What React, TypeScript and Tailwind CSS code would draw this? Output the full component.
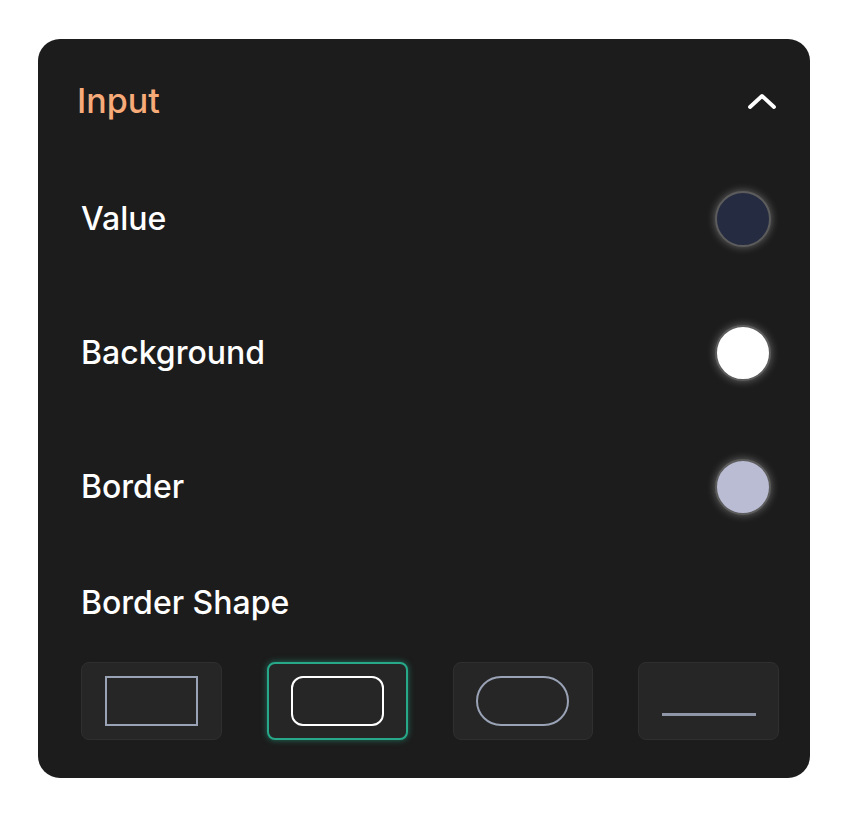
import React, { useState } from "react";

type Shape = "square" | "rounded" | "pill" | "underline";

const colorRows = [
  { label: "Value", color: "bg-[#252b40]" },
  { label: "Background", color: "bg-white" },
  { label: "Border", color: "bg-[#b9bcd3]" },
];

const shapes: Shape[] = ["square", "rounded", "pill", "underline"];

const ShapePreview: React.FC<{ shape: Shape; active: boolean }> = ({ shape, active }) => {
  if (shape === "underline") {
    return <div className="mt-[26px] h-[3px] w-[94px] bg-[#8e96a8]" />;
  }
  const radius =
    shape === "square" ? "rounded-none" : shape === "rounded" ? "rounded-[12px]" : "rounded-full";
  const stroke = active ? "border-white" : "border-[#9aa3b5]";
  return <div className={`h-[50px] w-[93px] border-2 ${stroke} ${radius}`} />;
};

export default function App() {
  const [shape, setShape] = useState<Shape>("rounded");

  return (
    <div
      className="flex min-h-[818px] w-full items-start justify-center bg-white pt-[39px]"
      style={{ fontFamily: "Inter, 'Noto Sans', sans-serif" }}
    >
      <div className="flex w-[772px] flex-col rounded-[22px] bg-[#1c1c1c] pb-[38px] pl-[39px] pr-[31px] pt-[42px]">
        {/* Header */}
        <div className="flex h-[40px] items-center justify-between">
          <span className="text-[34px] font-medium leading-none text-[#f7ab79]">Input</span>
          <button className="mr-[2px] flex items-center" aria-label="Collapse">
            <svg width="30" height="20" viewBox="0 0 30 20" fill="none">
              <polyline
                points="3,16 15,5 27,16"
                stroke="white"
                strokeWidth="3.8"
                strokeLinecap="round"
                strokeLinejoin="round"
              />
            </svg>
          </button>
        </div>

        {/* Color rows */}
        <div className="mt-[70px] flex flex-col gap-[78px] pl-[4px]">
          {colorRows.map((row) => (
            <div key={row.label} className="flex h-[56px] items-center justify-between">
              <span className="text-[32px] font-medium leading-none text-white">{row.label}</span>
              <div
                className={`mr-[8px] h-[56px] w-[56px] rounded-full border-2 border-[#5c5c5c] ${row.color} shadow-[0_0_8px_rgba(255,255,255,0.35)]`}
              />
            </div>
          ))}
        </div>

        {/* Border shape */}
        <div className="mt-[68px] flex h-[40px] items-center pl-[4px]">
          <span className="text-[32px] font-medium leading-none text-white">Border Shape</span>
        </div>

        <div className="mt-[39px] grid grid-cols-4 gap-[45px] pl-[4px]">
          {shapes.map((s) => {
            const active = s === shape;
            return (
              <button
                key={s}
                onClick={() => setShape(s)}
                className={`flex h-[78px] items-center justify-center rounded-[8px] bg-[#262626] ${
                  active
                    ? "border-2 border-[#27a889] shadow-[0_0_6px_rgba(39,168,137,0.6)]"
                    : "border border-[#2f2f2f]"
                }`}
              >
                <ShapePreview shape={s} active={active} />
              </button>
            );
          })}
        </div>
      </div>
    </div>
  );
}
